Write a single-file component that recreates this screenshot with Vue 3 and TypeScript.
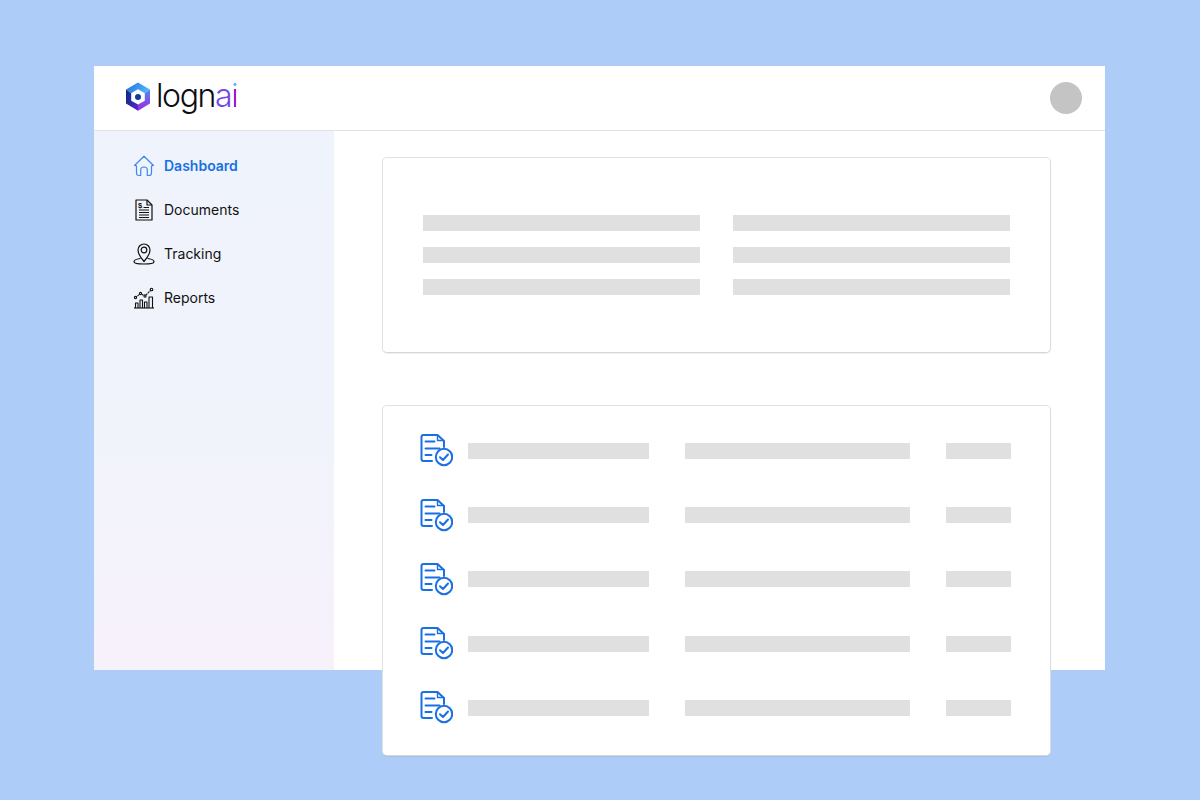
<script setup lang="ts">
const nav = [
  { label: 'Dashboard', icon: 'home', active: true },
  { label: 'Documents', icon: 'doc', active: false },
  { label: 'Tracking', icon: 'pin', active: false },
  { label: 'Reports', icon: 'chart', active: false },
]
const rows = [1, 2, 3, 4, 5]
</script>

<template>
  <div class="page">
    <div class="window">
      <header class="topbar">
        <div class="logo">
          <svg width="26" height="30" viewBox="0 0 26 30">
            <defs>
              <linearGradient id="hexTop" x1="0" y1="0" x2="1" y2="0.3">
                <stop offset="0" stop-color="#1f6fe0" />
                <stop offset="1" stop-color="#4fb4f8" />
              </linearGradient>
              <linearGradient id="hexRight" x1="0" y1="0" x2="0" y2="1">
                <stop offset="0" stop-color="#4f8cf0" />
                <stop offset="1" stop-color="#a225e0" />
              </linearGradient>
              <linearGradient id="hexBottom" x1="0" y1="0" x2="1" y2="0.6">
                <stop offset="0" stop-color="#082a7e" />
                <stop offset="1" stop-color="#4a2ac8" />
              </linearGradient>
            </defs>
            <path d="M13 0.5 L25 7.6 L19.8 11.2 L13 7.3 L6.2 11.2 L1 7.6 Z" fill="url(#hexTop)" />
            <path d="M25 7.6 L25 21.6 L13 28.7 L13 22.6 L19.8 18.7 L19.8 11.2 Z" fill="url(#hexRight)" />
            <path d="M1 7.6 L6.2 11.2 L6.2 18.7 L13 22.6 L13 28.7 L1 21.6 Z" fill="url(#hexBottom)" />
            <circle cx="13" cy="15" r="3" fill="#0c3f9c" />
          </svg>
          <span class="wordmark">logn<span class="ai">a</span><span class="dot-i">i</span></span>
        </div>
        <div class="avatar"></div>
      </header>

      <div class="body">
        <aside class="sidebar">
          <nav class="nav">
            <div v-for="item in nav" :key="item.label" class="nav-item" :class="{ active: item.active }">
              <svg v-if="item.icon === 'home'" class="nav-icon" viewBox="0 0 22 22" fill="none" stroke="#3f86ee" stroke-width="1.2" stroke-linejoin="round" stroke-linecap="round">
                <path d="M1.5 10.5 L11 1.2 L20.5 10.5 L18.5 10.9 L18.5 18 Q18.5 20.5 16 20.5 L14.3 20.5 L14.3 15 Q14.3 12 11 12 Q7.7 12 7.7 15 L7.7 20.5 L6 20.5 Q3.5 20.5 3.5 18 L3.5 10.9 Z" />
              </svg>
              <svg v-else-if="item.icon === 'doc'" class="nav-icon" viewBox="0 0 22 22" fill="none" stroke="#111" stroke-width="1.2" stroke-linejoin="round">
                <path d="M3 1 L14 1 L19 6 L19 21 L3 21 Z" />
                <path d="M14 1 L14 6 L19 6" />
                <path d="M6 11 H16 M6 13.5 H16 M6 16 H16 M6 18.5 H16 M10.5 8.5 H16" stroke-width="1.1" />
                <text x="5" y="9.4" class="dollar">$</text>
              </svg>
              <svg v-else-if="item.icon === 'pin'" class="nav-icon" viewBox="0 0 22 22" fill="none" stroke="#111" stroke-width="1.2" stroke-linecap="round" stroke-linejoin="round">
                <path d="M11 18.5 Q5 11.5 5 7 A6 6 0 0 1 17 7 Q17 11.5 11 18.5 Z" />
                <circle cx="11" cy="7" r="2.8" />
                <path d="M7 15.5 Q1 16.5 1 18.7 Q1 21 11 21 Q21 21 21 18.7 Q21 16.5 15 15.5" />
              </svg>
              <svg v-else class="nav-icon" viewBox="0 0 22 22" fill="none" stroke="#111" stroke-width="1.1" stroke-linejoin="round">
                <path d="M1 21 H21" />
                <path d="M2.5 21 V16 H5 V21 M7 21 V13 H9.5 V21 M11.5 21 V15 H14 V21 M16 21 V10 H19.5 V21" />
                <path d="M2.5 10.5 L7.5 6.5 L12 9 L18.5 2.5" stroke-dasharray="2 0.6" />
                <circle cx="2.5" cy="10.5" r="1.1" fill="#f1f4fc" />
                <circle cx="7.5" cy="6.5" r="1.1" fill="#f1f4fc" />
                <circle cx="12" cy="9" r="1.1" fill="#f1f4fc" />
                <circle cx="18.5" cy="2.5" r="1.3" fill="#f1f4fc" />
              </svg>
              <span class="nav-label">{{ item.label }}</span>
            </div>
          </nav>
        </aside>

        <main class="content">
          <section class="card summary">
            <div class="bar" v-for="n in 6" :key="n"></div>
          </section>
          <section class="card list">
            <div class="row" v-for="r in rows" :key="r">
              <svg class="doc-icon" viewBox="0 0 33 33" fill="none" stroke="#1a6fe4" stroke-width="2" stroke-linecap="round" stroke-linejoin="round">
                <path d="M12 27 H3.5 Q1.5 27 1.5 25 V3 Q1.5 1 3.5 1 H17.5 L24 7 V13" />
                <path d="M17.5 1.5 V6.5 H23.5" stroke-width="1.4" />
                <path d="M5.5 7.5 H14.5 M5.5 14.5 H19.5 M5.5 21 H11.5" />
                <circle cx="24" cy="23" r="8.2" />
                <path d="M20 23.2 L23 26 L28 20.5" />
              </svg>
              <div class="bar b1"></div>
              <div class="bar b2"></div>
              <div class="bar b3"></div>
            </div>
          </section>
        </main>
      </div>
    </div>
  </div>
</template>

<style>
html, body { margin: 0; }
</style>

<style scoped>
.page {
  width: 1200px;
  height: 800px;
  background: #adcdf8;
  padding: 66px 95px 0 94px;
  box-sizing: border-box;
  overflow: hidden;
  font-family: Inter, "Liberation Sans", sans-serif;
}
.window {
  height: 604px;
  background: #fff;
  display: flex;
  flex-direction: column;
}
.topbar {
  height: 65px;
  flex: none;
  box-sizing: border-box;
  border-bottom: 1px solid #e2e2e2;
  display: flex;
  align-items: center;
  justify-content: space-between;
  padding: 0 23px 0 31px;
}
.logo {
  display: flex;
  align-items: center;
  gap: 5px;
  margin-bottom: 2px;
}
.wordmark {
  font-size: 32px;
  font-weight: 300;
  color: #0c0c14;
  letter-spacing: -1.4px;
  line-height: 36px;
  margin-top: -3px;
}
.ai {
  color: #6f4de4;
}
.dot-i {
  background: linear-gradient(180deg, #4fb4f8 0 32%, #a514dc 32% 100%);
  -webkit-background-clip: text;
  background-clip: text;
  color: transparent;
}
.avatar {
  width: 32px;
  height: 32px;
  border-radius: 50%;
  background: #c4c4c4;
}
.body {
  flex: 1;
  display: flex;
  min-height: 0;
}
.sidebar {
  width: 240px;
  flex: none;
  background: linear-gradient(180deg, #eff3fc 0%, #f1f3fb 60%, #f7f1fb 100%);
  padding: 20px 0 0 39px;
  box-sizing: border-box;
}
.nav {
  display: flex;
  flex-direction: column;
  gap: 14px;
}
.nav-item {
  height: 30px;
  display: flex;
  align-items: center;
  gap: 9px;
  font-size: 14px;
  color: #111;
}
.nav-label {
  margin-bottom: 2px;
}
.nav-item.active {
  color: #1a6fe4;
  font-weight: 600;
}
.nav-icon {
  width: 22px;
  height: 22px;
  flex: none;
}
.dollar {
  font-family: "Liberation Sans", sans-serif;
  font-size: 7.5px;
  fill: #111;
  stroke: none;
  font-weight: 700;
}
.content {
  flex: 1;
  padding: 26px 54px 0 48px;
  display: flex;
  flex-direction: column;
  gap: 52px;
  min-width: 0;
}
.card {
  background: #fff;
  border: 1px solid #e2e2e2;
  border-bottom-color: #d6d6d6;
  border-right-color: #dcdcdc;
  border-radius: 5px;
  box-sizing: border-box;
  box-shadow: 0 1px 1px rgba(0, 0, 0, 0.06);
  flex: none;
}
.bar {
  height: 16px;
  background: #e0e0e0;
}
.summary {
  height: 196px;
  display: grid;
  grid-template-columns: 277px 277px;
  column-gap: 33px;
  row-gap: 16px;
  align-content: center;
  padding-left: 40px;
}
.list {
  height: 351px;
  padding: 28.4px 0 0 37px;
  display: flex;
  flex-direction: column;
  gap: 31.25px;
}
.row {
  height: 33px;
  display: flex;
  align-items: center;
}
.doc-icon {
  width: 33px;
  height: 33px;
  flex: none;
  margin-right: 15px;
}
.b1 { width: 181px; }
.b2 { width: 225px; margin-left: 36px; }
.b3 { width: 65px; margin-left: 36px; }
</style>
